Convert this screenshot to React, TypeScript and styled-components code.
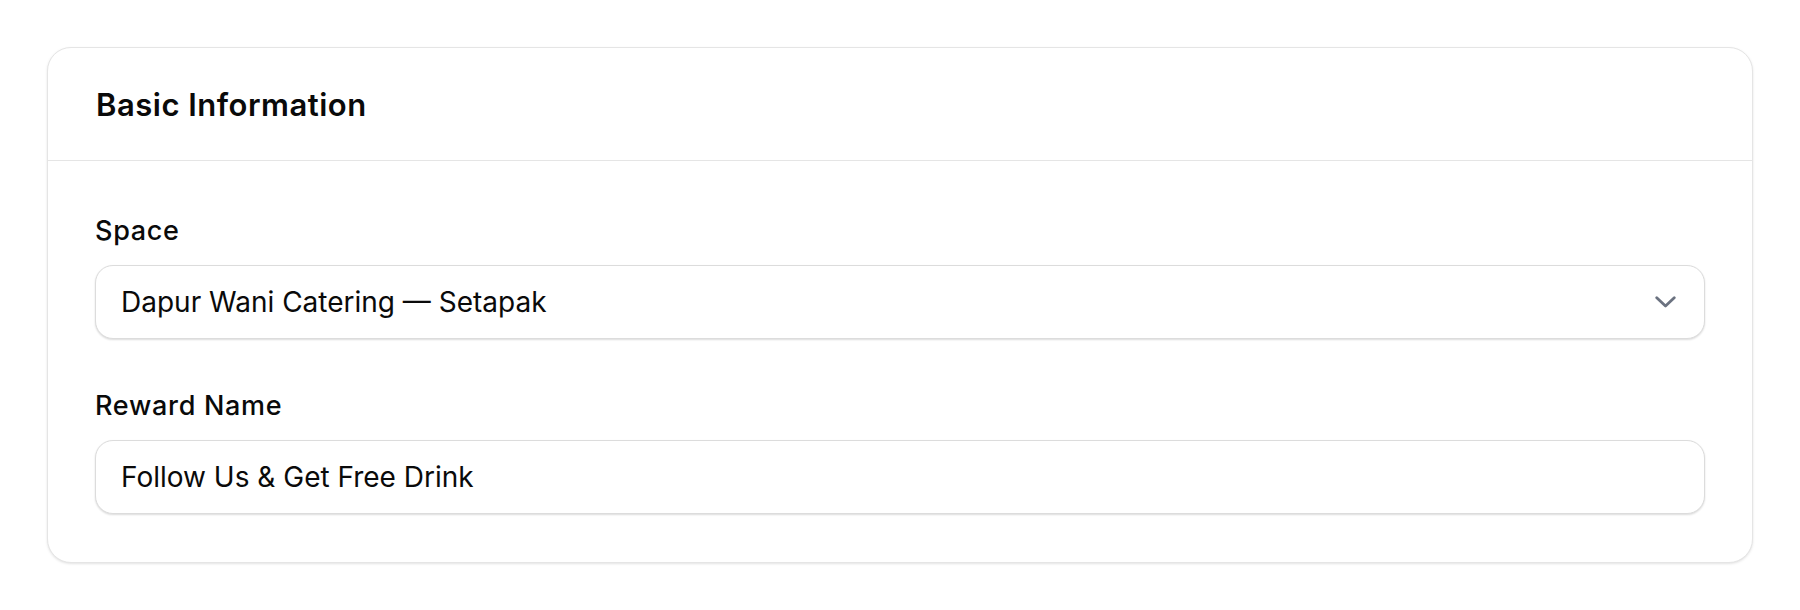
import React from "react";
import styled, { createGlobalStyle } from "styled-components";

const GlobalStyle = createGlobalStyle`
  html, body { margin: 0; padding: 0; background: #ffffff; }
  body {
    font-family: Inter, "Noto Sans", "Liberation Sans", sans-serif;
    color: #0a0a0a;
  }
  * { box-sizing: border-box; }
`;

const Page = styled.div`
  padding: 47px;
`;

const Card = styled.section`
  border: 1px solid #e5e5e5;
  border-radius: 24px;
  background: #ffffff;
  box-shadow: 0 1px 3px rgba(0, 0, 0, 0.08), 0 1px 2px rgba(0, 0, 0, 0.04);
  overflow: hidden;
`;

const Header = styled.header`
  padding: 39px 48px 37px;
  border-bottom: 1px solid #e5e5e5;
`;

const Title = styled.h2`
  margin: 0;
  font-size: 31px;
  line-height: 36px;
  font-weight: 600;
  letter-spacing: 0.5px;
  color: #0a0a0a;
`;

const Body = styled.div`
  padding: 52px 47px 48px;
  display: flex;
  flex-direction: column;
  gap: 49px;
`;

const Field = styled.div`
  display: flex;
  flex-direction: column;
  gap: 16px;
`;

const Label = styled.label`
  font-size: 27px;
  line-height: 36px;
  font-weight: 500;
  letter-spacing: 0.7px;
  color: #0a0a0a;
`;

const Control = styled.div`
  height: 74px;
  border: 1px solid #dcdcdc;
  border-radius: 18px;
  background: #ffffff;
  box-shadow: 0 1px 2px rgba(0, 0, 0, 0.14);
  display: flex;
  align-items: center;
  justify-content: space-between;
  padding: 0 28px 0 25px;
  color: #0a0a0a;
`;

const Value = styled.span`
  font-size: 28px;
  line-height: 36px;
`;

const Chevron = styled.svg`
  width: 21px;
  height: 12px;
  flex-shrink: 0;
`;

export default function App() {
  return (
    <>
      <GlobalStyle />
      <Page>
        <Card>
          <Header>
            <Title>Basic Information</Title>
          </Header>
          <Body>
            <Field>
              <Label>Space</Label>
              <Control>
                <Value>Dapur Wani Catering — Setapak</Value>
                <Chevron viewBox="0 0 21 12" fill="none">
                  <polyline
                    points="1.75,1.75 10.5,10 19.25,1.75"
                    stroke="#6b7280"
                    strokeWidth="2.8"
                    strokeLinecap="round"
                    strokeLinejoin="round"
                  />
                </Chevron>
              </Control>
            </Field>
            <Field>
              <Label>Reward Name</Label>
              <Control>
                <Value>Follow Us &amp; Get Free Drink</Value>
              </Control>
            </Field>
          </Body>
        </Card>
      </Page>
    </>
  );
}
